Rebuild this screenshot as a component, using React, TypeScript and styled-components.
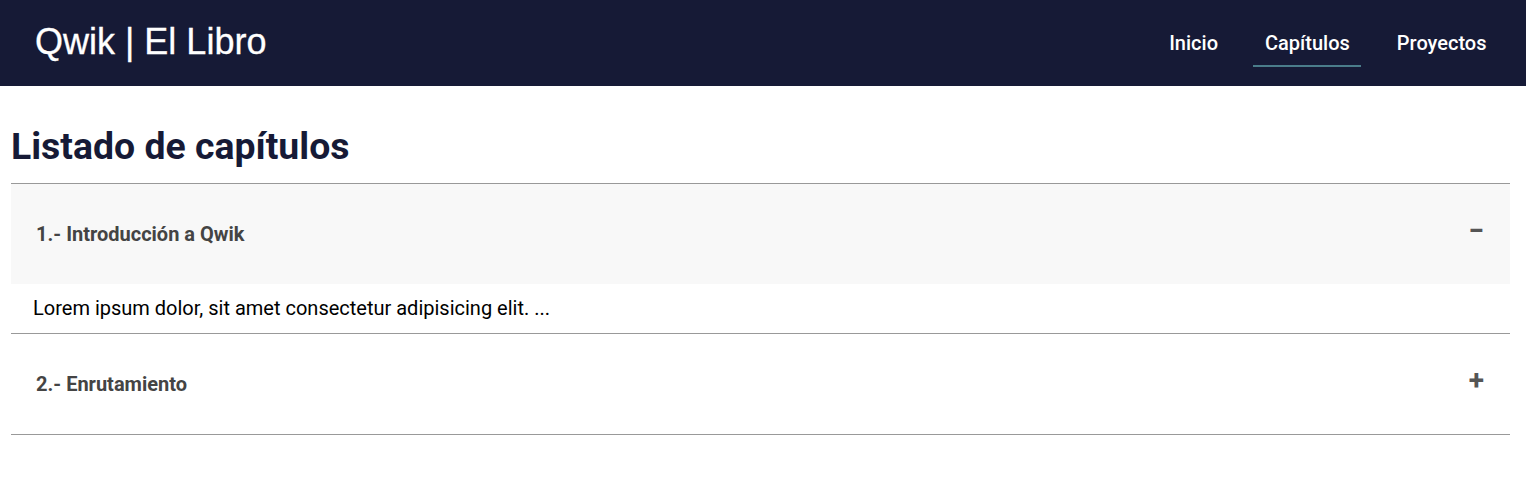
import React, { useState } from "react";
import styled, { createGlobalStyle } from "styled-components";

const Global = createGlobalStyle`
  html, body { margin: 0; padding: 0; background: #ffffff; }
  body { font-family: Roboto, "Liberation Sans", sans-serif; }
`;

const Header = styled.header`
  height: 86px;
  background: #161a36;
  display: flex;
  align-items: center;
  justify-content: space-between;
  padding: 0 28px 0 35px;
  box-sizing: border-box;
`;

const Brand = styled.div`
  font-family: "Liberation Sans", Arial, sans-serif;
  font-size: 36px;
  color: #ffffff;
  line-height: 1;
  margin-top: -2px;
  -webkit-text-stroke: 0.3px #ffffff;
`;

const Nav = styled.nav`
  display: flex;
  align-self: stretch;
  gap: 24px;
`;

const NavLink = styled.a<{ $active?: boolean }>`
  position: relative;
  display: flex;
  align-items: center;
  padding: 0 11.5px;
  color: #ffffff;
  font-family: Roboto, sans-serif;
  font-weight: 500;
  font-size: 20px;
  text-decoration: none;
  cursor: pointer;
  &::after {
    content: "";
    position: absolute;
    left: 0;
    right: 0;
    top: 65px;
    height: 2px;
    background: ${(p) => (p.$active ? "#4a7c8a" : "transparent")};
  }
`;

const Main = styled.main`
  margin: 0 16px 0 11px;
`;

const Title = styled.h1`
  font-family: Roboto, sans-serif;
  font-weight: 700;
  font-size: 37.4px;
  color: #161a36;
  margin: 0;
  padding: 38px 0 14px;
  line-height: 1.2;
`;

const Accordion = styled.div`
  border-top: 1px solid #999999;
`;

const Item = styled.div`
  border-bottom: 1px solid #999999;
`;

const ItemHeader = styled.button<{ $open?: boolean }>`
  width: 100%;
  height: 100px;
  display: flex;
  align-items: center;
  justify-content: space-between;
  padding: 0 26px 0 25px;
  box-sizing: border-box;
  background: ${(p) => (p.$open ? "#f8f8f8" : "#ffffff")};
  border: none;
  cursor: pointer;
  font-family: Roboto, sans-serif;
  font-weight: 700;
  font-size: 20px;
  color: #444444;
  text-align: left;
`;

const Sign = styled.span`
  font-family: Roboto, sans-serif;
  font-weight: 700;
  font-size: 28px;
  color: #555555;
  line-height: 1;
  margin-top: -6px;
`;

const ItemBody = styled.div`
  padding: 11px 22px 12px;
  font-family: Roboto, sans-serif;
  font-size: 20px;
  color: #000000;
  line-height: 26px;
`;

const chapters = [
  { title: "1.- Introducción a Qwik", body: "Lorem ipsum dolor, sit amet consectetur adipisicing elit. ..." },
  { title: "2.- Enrutamiento", body: "Lorem ipsum dolor, sit amet consectetur adipisicing elit. ..." },
];

export default function App() {
  const [open, setOpen] = useState(0);
  return (
    <>
      <Global />
      <Header>
        <Brand>Qwik | El Libro</Brand>
        <Nav>
          <NavLink>Inicio</NavLink>
          <NavLink $active>Capítulos</NavLink>
          <NavLink>Proyectos</NavLink>
        </Nav>
      </Header>
      <Main>
        <Title>Listado de capítulos</Title>
        <Accordion>
          {chapters.map((c, i) => (
            <Item key={c.title}>
              <ItemHeader $open={open === i} onClick={() => setOpen(open === i ? -1 : i)}>
                <span>{c.title}</span>
                <Sign>{open === i ? "−" : "+"}</Sign>
              </ItemHeader>
              {open === i && <ItemBody>{c.body}</ItemBody>}
            </Item>
          ))}
        </Accordion>
      </Main>
    </>
  );
}
